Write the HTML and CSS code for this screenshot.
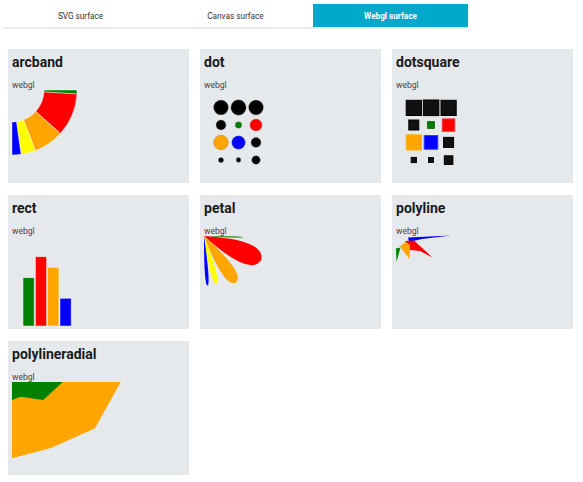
FILE: index.html
```html
<!DOCTYPE html>
<html>
<head>
<meta charset="utf-8">
<link rel="stylesheet" href="styles.css">
</head>
<body>
<div class="tabs">
  <div class="tab">SVG surface</div>
  <div class="tab">Canvas surface</div>
  <div class="tab active">Webgl surface</div>
</div>
<div class="grid">
  <div class="card">
    <h2 class="title">arcband</h2>
    <div class="label">webgl</div>
    <svg class="chart" width="173" height="92" viewBox="0 0 173 92">
      <g stroke="#ffffff" stroke-width="0.6" stroke-opacity="0.7">
        <path fill="#008000" d="M32,0 L65,0 A65,65 0 0 1 64.88,3.97 L31.94,1.95 A32,32 0 0 0 32,0 Z"/>
        <path fill="#ff0000" d="M31.94,1.95 L64.88,3.97 A65,65 0 0 1 48.30,43.49 L23.78,21.41 A32,32 0 0 0 31.94,1.95 Z"/>
        <path fill="#ffa500" d="M23.78,21.41 L48.30,43.49 A65,65 0 0 1 23.29,60.68 L11.47,29.87 A32,32 0 0 0 23.78,21.41 Z"/>
        <path fill="#ffff00" d="M11.47,29.87 L23.29,60.68 A65,65 0 0 1 9.05,64.37 L4.45,31.69 A32,32 0 0 0 11.47,29.87 Z"/>
        <path fill="#0000ff" d="M4.45,31.69 L9.05,64.37 A65,65 0 0 1 0,65 L0,32 A32,32 0 0 0 4.45,31.69 Z"/>
      </g>
    </svg>
  </div>
  <div class="card">
    <h2 class="title">dot</h2>
    <div class="label">webgl</div>
    <svg class="chart" width="173" height="92" viewBox="0 0 173 92">
      <g stroke="#8a8a8a" stroke-width="0.6" stroke-opacity="0.6">
        <circle cx="17" cy="17.5" r="7.4" fill="#000"/>
        <circle cx="34.5" cy="17.5" r="7.7" fill="#000"/>
        <circle cx="52" cy="17.5" r="7.4" fill="#000"/>
        <circle cx="17" cy="35" r="5" fill="#000"/>
        <circle cx="34.5" cy="35" r="3.3" fill="#008000"/>
        <circle cx="52" cy="35" r="6.1" fill="#ff0000"/>
        <circle cx="17" cy="52.5" r="7.4" fill="#ffa500"/>
        <circle cx="34.5" cy="52.5" r="6.8" fill="#0000ff"/>
        <circle cx="52" cy="52.5" r="5" fill="#000"/>
        <circle cx="17" cy="70" r="2.6" fill="#000"/>
        <circle cx="34.5" cy="70" r="2.4" fill="#000"/>
        <circle cx="52" cy="70" r="4.3" fill="#000"/>
      </g>
    </svg>
  </div>
  <div class="card">
    <h2 class="title">dotsquare</h2>
    <div class="label">webgl</div>
    <svg class="chart" width="173" height="92" viewBox="0 0 173 92">
      <g stroke-width="1">
        <rect x="10.2" y="10.3" width="15.2" height="15.2" fill="#111" stroke="#000"/>
        <rect x="27.3" y="10" width="15.6" height="15.6" fill="#111" stroke="#000"/>
        <rect x="45" y="10.3" width="15.2" height="15.2" fill="#111" stroke="#000"/>
        <rect x="12.8" y="30" width="10" height="10" fill="#111" stroke="#000"/>
        <rect x="31.7" y="31.7" width="6.6" height="6.6" fill="#008000" stroke="#005c00"/>
        <rect x="46.3" y="28.9" width="12.4" height="12.4" fill="#ff0000" stroke="#ff3030"/>
        <rect x="10.2" y="44.8" width="15.2" height="15.2" fill="#ffa500" stroke="#ffb020"/>
        <rect x="28.2" y="45.6" width="13.6" height="13.6" fill="#0000ff" stroke="#3333ff"/>
        <rect x="47.6" y="47.4" width="10" height="10" fill="#111" stroke="#000"/>
        <rect x="15.2" y="67.4" width="5.2" height="5.2" fill="#111" stroke="#000"/>
        <rect x="32.6" y="67.6" width="4.8" height="4.8" fill="#111" stroke="#000"/>
        <rect x="48.3" y="65.8" width="8.6" height="8.6" fill="#111" stroke="#000"/>
      </g>
    </svg>
  </div>
  <div class="card">
    <h2 class="title">rect</h2>
    <div class="label">webgl</div>
    <svg class="chart" width="173" height="92" viewBox="0 0 173 92">
      <g stroke="#ffffff" stroke-width="0.8" stroke-opacity="0.55">
        <rect x="11" y="41.7" width="11.2" height="48.3" fill="#008000"/>
        <rect x="23.4" y="20.7" width="11.2" height="69.3" fill="#ff0000"/>
        <rect x="35.7" y="31.3" width="11.2" height="58.7" fill="#ffa500"/>
        <rect x="48" y="62.3" width="11.2" height="27.7" fill="#0000ff"/>
      </g>
    </svg>
  </div>
  <div class="card">
    <h2 class="title">petal</h2>
    <div class="label">webgl</div>
    <svg class="chart" width="173" height="92" viewBox="0 0 173 92">
      <path fill="#008000" d="M0,0 Q39,0 38.98,1.19 Q38.93,2.38 0,0 Z"/>
      <path fill="#ff0000" d="M0,0 Q61.88,3.79 57.18,23.98 Q46.07,41.49 0,0 Z"/>
      <path fill="#ffa500" d="M0,0 Q41.99,37.81 32.0,46.56 Q20.25,52.75 0,0 Z"/>
      <path fill="#ffff00" d="M0,0 Q17.78,46.31 12.42,48.02 Q6.90,49.12 0,0 Z"/>
      <path fill="#0000ff" d="M0,0 Q6.92,49.22 3.47,49.58 Q0,49.7 0,0 Z"/>
    </svg>
  </div>
  <div class="card">
    <h2 class="title">polyline</h2>
    <div class="label">webgl</div>
    <svg class="chart" width="173" height="92" viewBox="0 0 173 92">
      <polygon fill="#0000ff" points="12,1.5 55,-0.5 26,3 13,6"/>
      <polygon fill="#ff0000" points="9,5 18,4.5 36.5,21.5 24,15 14,14"/>
      <polygon fill="#ffa500" points="4,10 10,6 14,9 13.5,23 8,16"/>
      <polygon fill="#008000" points="0,12.5 4.5,11.5 0.5,26"/>
    </svg>
  </div>
  <div class="card">
    <h2 class="title">polylineradial</h2>
    <div class="label">webgl</div>
    <svg class="chart" width="173" height="92" viewBox="0 0 173 92">
      <polygon fill="#ffa500" points="0,0 108.7,0 83,46.3 39.7,65.7 0,76.3"/>
      <polygon fill="#008000" points="0,0 50.7,0 31.3,18 8.7,14.7 0,18"/>
    </svg>
  </div>
</div>
</body>
</html>
```

FILE: styles.css
```css
html, body {
  margin: 0;
  padding: 0;
  background: #ffffff;
}

body {
  font-family: Roboto, "Liberation Sans", Arial, sans-serif;
  color: #222;
}

.tabs {
  display: flex;
  width: 465px;
  margin: 4px 0 0 3px;
  border-bottom: 2px solid #ececec;
}

.tab {
  width: 155px;
  height: 23px;
  display: flex;
  align-items: center;
  justify-content: center;
  font-size: 8.2px;
  color: #333;
}

.tab.active {
  background: #00a9c9;
  color: #ffffff;
  font-weight: bold;
}

.grid {
  display: grid;
  grid-template-columns: repeat(3, 181px);
  grid-auto-rows: 134px;
  column-gap: 11px;
  row-gap: 12px;
  margin: 20px 0 0 8px;
}

.card {
  background: #e6e9ec;
  padding: 5px 4px 0 4px;
  overflow: hidden;
}

.title {
  margin: 0;
  font-size: 14px;
  line-height: 16px;
  font-weight: bold;
  color: #1a1a1a;
}

.label {
  margin-top: 10px;
  font-size: 8.5px;
  line-height: 10px;
  color: #444;
}

.chart {
  display: block;
  overflow: visible;
}
```
